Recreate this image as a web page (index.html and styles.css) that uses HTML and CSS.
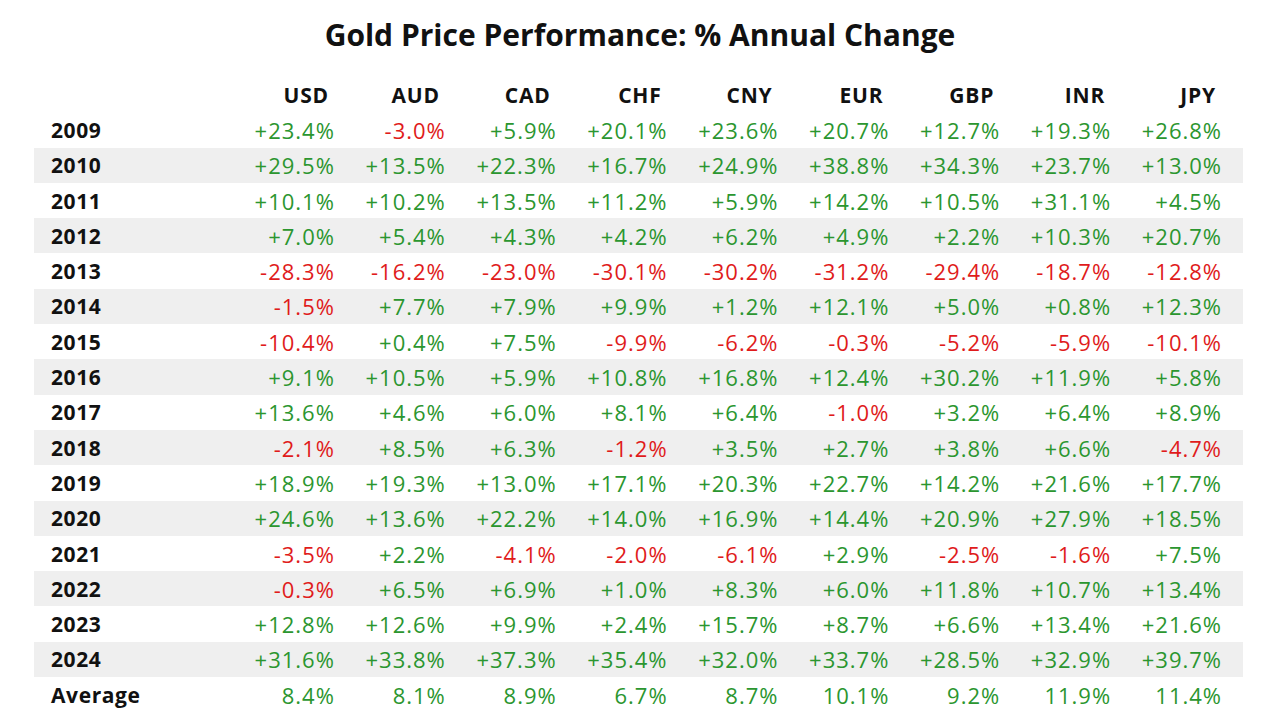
FILE: index.html
```html
<!DOCTYPE html>
<html>
<head>
<meta charset="utf-8">
<link rel="stylesheet" href="styles.css">
</head>
<body>
<div class="page">
  <h1 class="title">Gold Price Performance: % Annual Change</h1>
  <table class="perf">
    <thead>
      <tr><th class="yr"></th><th>USD</th><th>AUD</th><th>CAD</th><th>CHF</th><th>CNY</th><th>EUR</th><th>GBP</th><th>INR</th><th>JPY</th></tr>
    </thead>
    <tbody>
      <tr><td class="yr">2009</td><td class="up">+23.4%</td><td class="dn">-3.0%</td><td class="up">+5.9%</td><td class="up">+20.1%</td><td class="up">+23.6%</td><td class="up">+20.7%</td><td class="up">+12.7%</td><td class="up">+19.3%</td><td class="up">+26.8%</td></tr>
      <tr class="band"><td class="yr">2010</td><td class="up">+29.5%</td><td class="up">+13.5%</td><td class="up">+22.3%</td><td class="up">+16.7%</td><td class="up">+24.9%</td><td class="up">+38.8%</td><td class="up">+34.3%</td><td class="up">+23.7%</td><td class="up">+13.0%</td></tr>
      <tr><td class="yr">2011</td><td class="up">+10.1%</td><td class="up">+10.2%</td><td class="up">+13.5%</td><td class="up">+11.2%</td><td class="up">+5.9%</td><td class="up">+14.2%</td><td class="up">+10.5%</td><td class="up">+31.1%</td><td class="up">+4.5%</td></tr>
      <tr class="band"><td class="yr">2012</td><td class="up">+7.0%</td><td class="up">+5.4%</td><td class="up">+4.3%</td><td class="up">+4.2%</td><td class="up">+6.2%</td><td class="up">+4.9%</td><td class="up">+2.2%</td><td class="up">+10.3%</td><td class="up">+20.7%</td></tr>
      <tr><td class="yr">2013</td><td class="dn">-28.3%</td><td class="dn">-16.2%</td><td class="dn">-23.0%</td><td class="dn">-30.1%</td><td class="dn">-30.2%</td><td class="dn">-31.2%</td><td class="dn">-29.4%</td><td class="dn">-18.7%</td><td class="dn">-12.8%</td></tr>
      <tr class="band"><td class="yr">2014</td><td class="dn">-1.5%</td><td class="up">+7.7%</td><td class="up">+7.9%</td><td class="up">+9.9%</td><td class="up">+1.2%</td><td class="up">+12.1%</td><td class="up">+5.0%</td><td class="up">+0.8%</td><td class="up">+12.3%</td></tr>
      <tr><td class="yr">2015</td><td class="dn">-10.4%</td><td class="up">+0.4%</td><td class="up">+7.5%</td><td class="dn">-9.9%</td><td class="dn">-6.2%</td><td class="dn">-0.3%</td><td class="dn">-5.2%</td><td class="dn">-5.9%</td><td class="dn">-10.1%</td></tr>
      <tr class="band"><td class="yr">2016</td><td class="up">+9.1%</td><td class="up">+10.5%</td><td class="up">+5.9%</td><td class="up">+10.8%</td><td class="up">+16.8%</td><td class="up">+12.4%</td><td class="up">+30.2%</td><td class="up">+11.9%</td><td class="up">+5.8%</td></tr>
      <tr><td class="yr">2017</td><td class="up">+13.6%</td><td class="up">+4.6%</td><td class="up">+6.0%</td><td class="up">+8.1%</td><td class="up">+6.4%</td><td class="dn">-1.0%</td><td class="up">+3.2%</td><td class="up">+6.4%</td><td class="up">+8.9%</td></tr>
      <tr class="band"><td class="yr">2018</td><td class="dn">-2.1%</td><td class="up">+8.5%</td><td class="up">+6.3%</td><td class="dn">-1.2%</td><td class="up">+3.5%</td><td class="up">+2.7%</td><td class="up">+3.8%</td><td class="up">+6.6%</td><td class="dn">-4.7%</td></tr>
      <tr><td class="yr">2019</td><td class="up">+18.9%</td><td class="up">+19.3%</td><td class="up">+13.0%</td><td class="up">+17.1%</td><td class="up">+20.3%</td><td class="up">+22.7%</td><td class="up">+14.2%</td><td class="up">+21.6%</td><td class="up">+17.7%</td></tr>
      <tr class="band"><td class="yr">2020</td><td class="up">+24.6%</td><td class="up">+13.6%</td><td class="up">+22.2%</td><td class="up">+14.0%</td><td class="up">+16.9%</td><td class="up">+14.4%</td><td class="up">+20.9%</td><td class="up">+27.9%</td><td class="up">+18.5%</td></tr>
      <tr><td class="yr">2021</td><td class="dn">-3.5%</td><td class="up">+2.2%</td><td class="dn">-4.1%</td><td class="dn">-2.0%</td><td class="dn">-6.1%</td><td class="up">+2.9%</td><td class="dn">-2.5%</td><td class="dn">-1.6%</td><td class="up">+7.5%</td></tr>
      <tr class="band"><td class="yr">2022</td><td class="dn">-0.3%</td><td class="up">+6.5%</td><td class="up">+6.9%</td><td class="up">+1.0%</td><td class="up">+8.3%</td><td class="up">+6.0%</td><td class="up">+11.8%</td><td class="up">+10.7%</td><td class="up">+13.4%</td></tr>
      <tr><td class="yr">2023</td><td class="up">+12.8%</td><td class="up">+12.6%</td><td class="up">+9.9%</td><td class="up">+2.4%</td><td class="up">+15.7%</td><td class="up">+8.7%</td><td class="up">+6.6%</td><td class="up">+13.4%</td><td class="up">+21.6%</td></tr>
      <tr class="band"><td class="yr">2024</td><td class="up">+31.6%</td><td class="up">+33.8%</td><td class="up">+37.3%</td><td class="up">+35.4%</td><td class="up">+32.0%</td><td class="up">+33.7%</td><td class="up">+28.5%</td><td class="up">+32.9%</td><td class="up">+39.7%</td></tr>
      <tr><td class="yr">Average</td><td class="up">8.4%</td><td class="up">8.1%</td><td class="up">8.9%</td><td class="up">6.7%</td><td class="up">8.7%</td><td class="up">10.1%</td><td class="up">9.2%</td><td class="up">11.9%</td><td class="up">11.4%</td></tr>
    </tbody>
  </table>
</div>
</body>
</html>
```
FILE: styles.css
```css
html, body {
  margin: 0;
  padding: 0;
  background: #ffffff;
}
body {
  font-family: "Open Sans", "Noto Sans", sans-serif;
  color: #111111;
  width: 1280px;
  height: 720px;
  overflow: hidden;
}
.page {
  padding-top: 15px;
  padding-left: 34px;
}
.title {
  margin: 0 0 0 -34px;
  width: 1280px;
  text-align: center;
  font-size: 30px;
  line-height: 40px;
  font-weight: 700;
  letter-spacing: 0;
  color: #111111;
}
.perf {
  margin-top: 22px;
  border-collapse: collapse;
  table-layout: fixed;
  width: 1209px;
}
.perf th, .perf td {
  width: 110.9px;
  height: 35.3px;
  padding: 0 21px 0 0;
  text-align: right;
  white-space: nowrap;
  box-sizing: border-box;
  vertical-align: middle;
}
.perf th {
  padding-right: 27px;
  font-size: 21px;
  font-weight: 700;
  letter-spacing: 0.8px;
}
.perf td {
  font-size: 22px;
  font-weight: 400;
  letter-spacing: 1px;
}
.perf .yr {
  width: 211px;
  text-align: left;
  padding: 0 0 0 17px;
  font-size: 21px;
  font-weight: 700;
  letter-spacing: 0.6px;
  color: #111111;
}
.band td {
  background: #efefef;
}
.up {
  color: #2b962f;
}
.dn {
  color: #e01b1b;
}
```
